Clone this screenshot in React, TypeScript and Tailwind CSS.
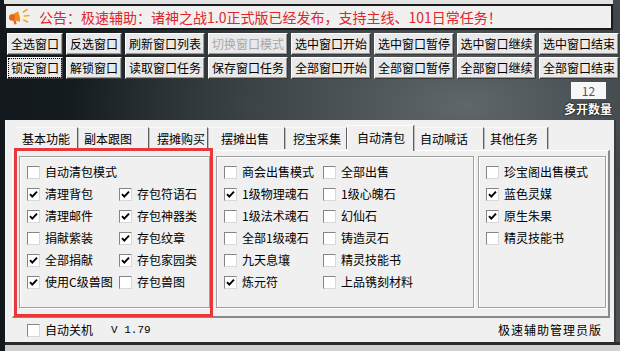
import React from 'react';

type BtnProps = { label: string; w: string; disabled?: boolean; focused?: boolean };

const Btn: React.FC<BtnProps> = ({ label, w, disabled = false, focused = false }) => (
  <div
    className={`${w} h-[22px] shrink-0 flex items-center justify-center bg-[#e9e9e9] border border-t-white border-l-white border-b-[#3a3a3a] border-r-[#3a3a3a] shadow-[inset_-1px_-1px_0_#9a9a9a] text-[12px] leading-none whitespace-nowrap ${
      disabled ? 'text-[#a8a8a8]' : 'text-black'
    }`}
  >
    {focused ? (
      <span className="px-[2px] py-[3px] outline outline-1 outline-dotted outline-black -outline-offset-0">{label}</span>
    ) : (
      label
    )}
  </div>
);

const Check: React.FC<{ label: string; checked?: boolean }> = ({ label, checked = false }) => (
  <div className="flex items-center h-[22px]">
    <span className="w-[13px] h-[13px] shrink-0 bg-white border border-t-[#858585] border-l-[#858585] border-b-[#d8d8d8] border-r-[#d8d8d8] flex items-center justify-center">
      {checked && (
        <svg width="9" height="9" viewBox="0 0 9 9">
          <path d="M1 4.2 L3.3 6.6 L8 1.6" fill="none" stroke="#000" strokeWidth="1.9" />
        </svg>
      )}
    </span>
    <span className="ml-[5px] text-[12px] leading-none whitespace-nowrap text-black">{label}</span>
  </div>
);

// 喇叭图标
const Horn = () => (
  <svg width="23" height="20" viewBox="0 0 23 20" className="shrink-0">
    <path d="M3 8 L11 4 L13 15 L5 13 Z" fill="#f08a24" />
    <ellipse cx="4" cy="10.5" rx="3" ry="3.2" fill="#e2661a" />
    <path d="M11 4 Q14 9 13 15 L12 15 Q12.5 9 10 4.5 Z" fill="#fff3d6" />
    <path d="M5 13 L6.5 17.5 L8.5 17 L7.8 13.6 Z" fill="#e2661a" />
    <path d="M15.5 5 L19 2.5" stroke="#f5a623" strokeWidth="1.6" strokeLinecap="round" />
    <path d="M16.5 9 L21 8.5" stroke="#f5a623" strokeWidth="1.6" strokeLinecap="round" />
    <path d="M15.8 13 L19.5 15" stroke="#f5a623" strokeWidth="1.6" strokeLinecap="round" />
  </svg>
);

const row1: BtnProps[] = [
  { label: '全选窗口', w: 'w-[56px]' },
  { label: '反选窗口', w: 'w-[56px]' },
  { label: '刷新窗口列表', w: 'w-[80px]' },
  { label: '切换窗口模式', w: 'w-[80px]', disabled: true },
  { label: '选中窗口开始', w: 'w-[80px]' },
  { label: '选中窗口暂停', w: 'w-[80px]' },
  { label: '选中窗口继续', w: 'w-[79px]' },
  { label: '选中窗口结束', w: 'w-[80px]' },
];

const row2: BtnProps[] = [
  { label: '锁定窗口', w: 'w-[56px]', focused: true },
  { label: '解锁窗口', w: 'w-[56px]' },
  { label: '读取窗口任务', w: 'w-[80px]' },
  { label: '保存窗口任务', w: 'w-[80px]' },
  { label: '全部窗口开始', w: 'w-[80px]' },
  { label: '全部窗口暂停', w: 'w-[80px]' },
  { label: '全部窗口继续', w: 'w-[79px]' },
  { label: '全部窗口结束', w: 'w-[80px]' },
];

const tabs = [
  { t: '基本功能', cls: 'w-[61px] pl-[5px]' },
  { t: '副本跟图', cls: 'w-[71px] pl-[6px]' },
  { t: '摆摊购买', cls: 'w-[59px] pl-[8px]' },
  { t: '摆摊出售', cls: 'w-[77px] pl-[13px]' },
  { t: '挖宝采集', cls: 'w-[62px] pl-[8px]' },
  { t: '自动清包', cls: 'w-[67px] pl-[9px]', active: true },
  { t: '自动喊话', cls: 'w-[70px] pl-[6px]' },
  { t: '其他任务', cls: 'w-[64px] pl-[6px]' },
];

type Item = { label: string; checked?: boolean } | null;

const g1: [Item, Item][] = [
  [{ label: '清理背包', checked: true }, { label: '存包符语石', checked: true }],
  [{ label: '清理邮件', checked: true }, { label: '存包神器类', checked: true }],
  [{ label: '捐献紫装' }, { label: '存包纹章', checked: true }],
  [{ label: '全部捐献', checked: true }, { label: '存包家园类', checked: true }],
  [{ label: '使用C级兽图', checked: true }, { label: '存包兽图' }],
];

const g2: [Item, Item][] = [
  [{ label: '商会出售模式' }, { label: '全部出售' }],
  [{ label: '1级物理魂石', checked: true }, { label: '1级心魄石' }],
  [{ label: '1级法术魂石' }, { label: '幻仙石' }],
  [{ label: '全部1级魂石' }, { label: '铸造灵石' }],
  [{ label: '九天息壤' }, { label: '精灵技能书' }],
  [{ label: '炼元符', checked: true }, { label: '上品镌刻材料' }],
];

const g3: Item[] = [
  { label: '珍宝阁出售模式' },
  { label: '蓝色灵媒', checked: true },
  { label: '原生朱果', checked: true },
  { label: '精灵技能书' },
];

const groupCls =
  'h-[152px] shrink-0 border border-[#a0a0a0] shadow-[1px_1px_0_#fff,inset_1px_1px_0_#fff] pt-[4px] pl-[7px]';

export default function App() {
  return (
    <div
      className="relative w-[620px] h-[351px] overflow-hidden flex flex-col bg-[radial-gradient(ellipse_at_75%_30%,#60676b_0%,#3e464a_30%,transparent_60%),linear-gradient(90deg,#12181b_0%,#1a2327_35%,#2a3337_60%,#4c5458_100%)]"
      style={{ fontFamily: '"Noto Sans CJK SC", "Noto Sans", sans-serif' }}
    >
      {/* top strip */}
      <div className="h-[4px] ml-[4px] mr-[7px] bg-[#e2e2e2]" />

      {/* notice bar */}
      <div className="ml-[4px] w-[609px] h-[26px] shrink-0 border-2 border-[#1b1b1b] bg-[#f0f0f0] flex items-center pl-[2px] gap-[8px]">
        <Horn />
        <span className="text-[14px] leading-none text-[#e0262b] whitespace-nowrap">
          公告：极速辅助：诸神之战1.0正式版已经发布，支持主线、101日常任务！
        </span>
      </div>

      {/* button rows */}
      <div className="pl-[7px] pt-[3px] flex flex-col gap-[2px]">
        <div className="flex gap-[3px]">
          {row1.map((b) => (
            <Btn key={b.label} {...b} />
          ))}
        </div>
        <div className="flex gap-[3px]">
          {row2.map((b) => (
            <Btn key={b.label} {...b} />
          ))}
        </div>
      </div>

      {/* count */}
      <div className="h-[41px] shrink-0 flex flex-col items-end pr-[8px] pt-[3px]">
        <div className="mr-[6px] w-[35px] h-[17px] bg-[#f7f7f7] flex items-center justify-center text-[12px] leading-none text-[#555]">
          12
        </div>
        <div className="mt-[4px] text-[12px] leading-none font-bold text-white [text-shadow:0_0_2px_#000,0_0_1px_#000]">
          多开数量
        </div>
      </div>

      {/* main panel */}
      <div className="relative ml-[5px] w-[611px] h-[222px] shrink-0 bg-[#f0f0f0] border-r-2 border-[#3c3c3c] flex flex-col">
        {/* tabs */}
        <div className="h-[30px] pl-[12px] pt-[6px] flex items-end">
          {tabs.map((t) => (
            <div
              key={t.t}
              className={`${t.cls} flex items-center text-[12px] leading-none whitespace-nowrap border-r border-r-[#5f5f5f] shadow-[1px_0_0_#bdbdbd] ${
                t.active
                  ? 'h-[26px] relative z-10 bg-[#f0f0f0] border-l border-l-white border-t border-t-white -mb-[1px] pb-[2px]'
                  : 'h-[22px] border-t border-t-[#fafafa] mb-[1px]'
              }`}
            >
              {t.t}
            </div>
          ))}
        </div>

        {/* tab page */}
        <div className="ml-[7px] w-[598px] h-[168px] border-t border-l border-t-white border-l-white border-r-2 border-b-2 border-r-[#8a8a8a] border-b-[#8a8a8a] flex gap-[6px] pl-[6px] pt-[5px]">
          <div className={`${groupCls} w-[191px]`}>
            <Check label="自动清包模式" />
            {g1.map(([a, b], i) => (
              <div key={i} className="grid grid-cols-[92px_auto]">
                {a ? <Check label={a.label} checked={a.checked} /> : <div />}
                {b ? <Check label={b.label} checked={b.checked} /> : <div />}
              </div>
            ))}
          </div>
          <div className={`${groupCls} w-[258px]`}>
            {g2.map(([a, b], i) => (
              <div key={i} className="grid grid-cols-[99px_auto]">
                {a ? <Check label={a.label} checked={a.checked} /> : <div />}
                {b ? <Check label={b.label} checked={b.checked} /> : <div />}
              </div>
            ))}
          </div>
          <div className={`${groupCls} w-[128px] -ml-[2px]`}>
            {g3.map((a, i) => (a ? <Check key={i} label={a.label} checked={a.checked} /> : null))}
          </div>
        </div>

        {/* bottom row */}
        <div className="flex-1 flex items-center pl-[22px] pr-[12px]">
          <Check label="自动关机" />
          <span className="ml-[18px] text-[11px] leading-none text-black" style={{ fontFamily: '"Liberation Mono", monospace' }}>
            V 1.79
          </span>
          <span className="ml-auto text-[12px] leading-none tracking-[1px] text-black">极速辅助管理员版</span>
        </div>

        {/* red highlight */}
        <div className="absolute left-[9px] top-[28px] w-[199px] h-[169px] border-[3px] border-[#e8383b] pointer-events-none" />
      </div>

      {/* bottom edge */}
      <div className="h-[3px] shrink-0 ml-[5px] bg-[#2a2a2a]" />
      <div className="flex-1 ml-[5px] bg-[#cfcfcf]" />
    </div>
  );
}
